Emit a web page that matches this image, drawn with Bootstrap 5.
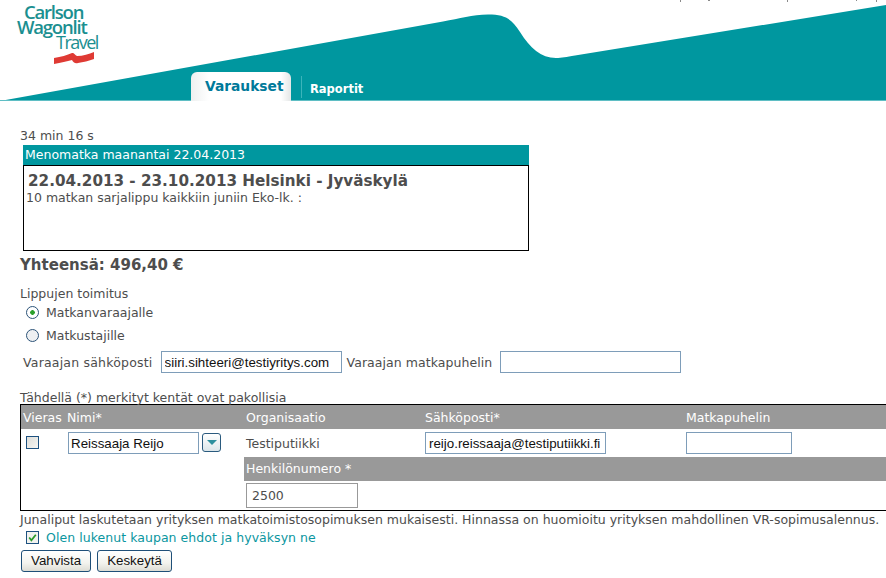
<!DOCTYPE html>
<html lang="fi">
<head>
<meta charset="utf-8">
<title>Varaukset</title>
<link href="https://cdn.jsdelivr.net/npm/bootstrap@5.3.0/dist/css/bootstrap.min.css" rel="stylesheet">
<style>
html,body{overflow:hidden;height:100%;}
body{background:#fff;color:#4d4d4d;font-family:"DejaVu Sans",Verdana,sans-serif;font-size:12.5px;line-height:15px;}
.hdr{position:relative;height:102px;}
.hdr-art{position:absolute;left:0;top:0;width:886px;height:102px;}
.logo{position:absolute;left:17px;top:4px;width:80px;height:62px;font-family:"Open Sans",sans-serif;font-weight:600;color:#1b8f90;font-size:18.5px;line-height:15px;letter-spacing:-1.2px;}
.logo div{white-space:nowrap;}
.logo .l1{margin-left:7px;}
.logo .l3{margin-left:39px;font-weight:400;font-size:18px;letter-spacing:-1.5px;line-height:16px;}
.logo svg{position:absolute;left:36px;top:47px;}
.tabs{position:absolute;left:191px;top:72px;height:30px;}
.tab-on{width:100px;height:29px;background:linear-gradient(90deg,#eef0f0,#fff 18%,#fff 90%,#e3e6e6);border-radius:6px 6px 0 0;color:#00799a;font-weight:700;font-size:13.8px;line-height:28px;padding-left:14px;}
.tab-off{margin:4px 0 0 10px;height:22px;border-left:1px solid #3cb4ba;padding-left:8px;color:#fff;font-weight:700;font-size:11.5px;line-height:27px;}
.pg{padding:26px 0 0 20px;width:900px;}
.trip{width:506px;margin:2px 0 0 3px;}
.trip-h{background:#00979f;color:#fff;height:20px;line-height:20px;padding-left:2px;}
.trip-b{border:1px solid #000;height:86px;padding:6px 2px;}
.trip-t{font-weight:700;font-size:15.2px;line-height:18px;padding-left:2px;}
.tot{font-weight:700;font-size:15px;line-height:18px;margin-top:5px;}
.deliv{margin-top:12px;}
.opt{height:23px;padding-left:6px;}
.rd{appearance:none;width:13px;height:13px;border-radius:50%;border:1px solid #2c5378;background:#eef0f2;margin:0 7px 0 0;display:block;flex:none;}
.rd:checked{background:radial-gradient(circle,#2ca02c 0,#2ca02c 2px,#fff 2.6px);}
.fld{font-family:"Liberation Sans",Arial,sans-serif;font-size:13.33px;color:#111;border:1px solid #7e9db9;height:22px;padding:0 3px;background:#fff;border-radius:0;outline:0;display:block;}
.contact{margin:4px 0 0 3px;height:22px;letter-spacing:.2px;}
.contact .lb2{letter-spacing:.06px;}
.f-a{width:181px;margin:0 5px 0 8px;letter-spacing:0;}
.f-b{width:181px;margin-left:8px;letter-spacing:0;}
.req{margin-top:17px;height:14px;line-height:15px;}
.ptable{width:866px;border:solid #000;border-width:1px 0 1px 1px;height:107px;}
.pr{display:flex;}
.pr-h{background:#999;color:#fff;height:24px;line-height:25px;}
.c1{width:46px;padding-left:2px;flex:none;}
.c2{width:178px;flex:none;}
.c3{width:180px;flex:none;padding-left:1px;}
.c4{width:261px;flex:none;}
.c5{flex:1;}
.pr-b{height:25px;padding-top:3px;}
.cb{appearance:none;width:13px;height:13px;border:1px solid #1d5180;background:linear-gradient(135deg,#dcdcd8,#f6f6f3);margin:4px 0 0 3px;display:block;border-radius:0;}
.f-nimi{width:131px;margin-left:1px;padding:0 2px;}
.f-mail{width:181px;}
.f-ph{width:106px;}
.dd{width:19px;height:19px;border:1px solid #2a5a7e;border-radius:3px;background:linear-gradient(#fff,#dbe6ea);padding:0;margin:1px 0 0 3px;display:flex;align-items:center;justify-content:center;}
.dd i{display:block;width:0;height:0;border:solid transparent;border-width:5px 5px 0;border-top-color:#2c8f9e;}
.nimi{display:flex;}
.pers{margin-left:223px;}
.pers-h{background:#999;color:#fff;height:24px;line-height:24px;padding-left:2px;margin-top:3px;}
.pers-in{height:26px;padding:2px 0 0 2px;}
.f-hn{width:112px;height:25px;border:1px solid #999;color:#4d4d4d;font-family:"DejaVu Sans",sans-serif;font-size:12.5px;padding:0 5px;}
.note{margin-top:1px;height:15px;white-space:nowrap;}
.agree{margin:1px 0 0 6px;height:18px;color:#0b96a0;letter-spacing:.05px;}
.cb2{appearance:none;width:13px;height:13px;border:1px solid #1d5180;margin:0 7px 0 0;display:block;background:#f2f2ee;flex:none;}
.agree-mark{position:absolute;left:1px;top:1px;width:11px;height:11px;pointer-events:none;}
.agree-box{position:relative;flex:none;}
.btns{margin:4px 0 0 1px;gap:6px;}
.act{font-family:"Liberation Sans",Arial,sans-serif;font-size:13.33px;line-height:18px;color:#111;border:1px solid #1f4f78;border-radius:3px;background:linear-gradient(#fff,#f3f3ee 60%,#dddcd4);height:22px;padding:0 9px;}
</style>
</head>
<body>
<header class="hdr">
  <svg class="hdr-art" viewBox="0 0 886 102" aria-hidden="true">
    <path fill="#00979f" d="M0 101 L443 21.5 C460 18.5 472 14.5 488 14.5 C507 14.5 512 20 520 32 C530 48 541 58 556 58 C562 58 566 57 575 55.5 L886 5 L886 101 Z"/>
    <rect x="0" y="100" width="886" height="1" fill="#5fbec4"/>
    <g fill="#8a8a8a"><rect x="680" y="0" width="1" height="2"/><rect x="708" y="0" width="2" height="1"/><rect x="787" y="0" width="1" height="2"/><rect x="856" y="0" width="1" height="1"/><rect x="876" y="0" width="1" height="2"/></g>
  </svg>
  <div class="logo">
    <div class="l1">Carlson</div>
    <div>Wagonlit</div>
    <div class="l3">Travel</div>
    <svg width="42" height="14" viewBox="0 0 42 14" aria-hidden="true"><path fill="#df3a34" d="M1 7 C8 6 14 4 19 2 C21 1.5 22 4 24 5 C30 5 36 3 41 1 L41 8 C36 10 30 11 25 12 C22 13 20 11 19 9 C14 10 8 12 1 13 Z"/></svg>
  </div>
  <nav class="tabs d-flex">
    <div class="tab-on">Varaukset</div>
    <div class="tab-off">Raportit</div>
  </nav>
</header>
<main class="pg">
  <div>34 min 16 s</div>
  <section class="trip">
    <div class="trip-h">Menomatka maanantai 22.04.2013</div>
    <div class="trip-b">
      <div class="trip-t">22.04.2013 - 23.10.2013 Helsinki - Jyväskylä</div>
      <div>10 matkan sarjalippu kaikkiin juniin Eko-lk. :</div>
    </div>
  </section>
  <div class="tot">Yhteensä: 496,40 €</div>
  <div class="deliv">Lippujen toimitus</div>
  <div class="opt d-flex align-items-center"><input class="rd" type="radio" name="d" checked><span>Matkanvaraajalle</span></div>
  <div class="opt d-flex align-items-center"><input class="rd" type="radio" name="d"><span>Matkustajille</span></div>
  <div class="contact d-flex align-items-center">
    <span>Varaajan sähköposti</span><input class="fld f-a" value="siiri.sihteeri@testiyritys.com">
    <span class="lb2">Varaajan matkapuhelin</span><input class="fld f-b" value="">
  </div>
  <div class="req">Tähdellä (*) merkityt kentät ovat pakollisia</div>
  <section class="ptable">
    <div class="pr pr-h"><div class="c1">Vieras</div><div class="c2">Nimi*</div><div class="c3">Organisaatio</div><div class="c4">Sähköposti*</div><div class="c5">Matkapuhelin</div></div>
    <div class="pr pr-b">
      <div class="c1"><input class="cb" type="checkbox"></div>
      <div class="c2 nimi"><input class="fld f-nimi" value="Reissaaja Reijo"><button class="dd" type="button" aria-label="Avaa"><i></i></button></div>
      <div class="c3 d-flex align-items-center">Testiputiikki</div>
      <div class="c4"><input class="fld f-mail" value="reijo.reissaaja@testiputiikki.fi"></div>
      <div class="c5"><input class="fld f-ph" value=""></div>
    </div>
    <div class="pers">
      <div class="pers-h">Henkilönumero *</div>
      <div class="pers-in"><input class="fld f-hn" value="2500"></div>
    </div>
  </section>
  <div class="note">Junaliput laskutetaan yrityksen matkatoimistosopimuksen mukaisesti. Hinnassa on huomioitu yrityksen mahdollinen VR-sopimusalennus.</div>
  <div class="agree d-flex align-items-center">
    <span class="agree-box"><input class="cb2" type="checkbox" checked><svg class="agree-mark" viewBox="0 0 10 10" aria-hidden="true"><path d="M2 5 L4 7.5 L8 2.5" fill="none" stroke="#2a9a2a" stroke-width="1.6"/></svg></span>
    <span>Olen lukenut kaupan ehdot ja hyväksyn ne</span>
  </div>
  <div class="btns d-flex">
    <button class="act" type="button">Vahvista</button>
    <button class="act" type="button">Keskeytä</button>
  </div>
</main>
<script src="https://cdn.jsdelivr.net/npm/bootstrap@5.3.0/dist/js/bootstrap.bundle.min.js"></script>
</body>
</html>
